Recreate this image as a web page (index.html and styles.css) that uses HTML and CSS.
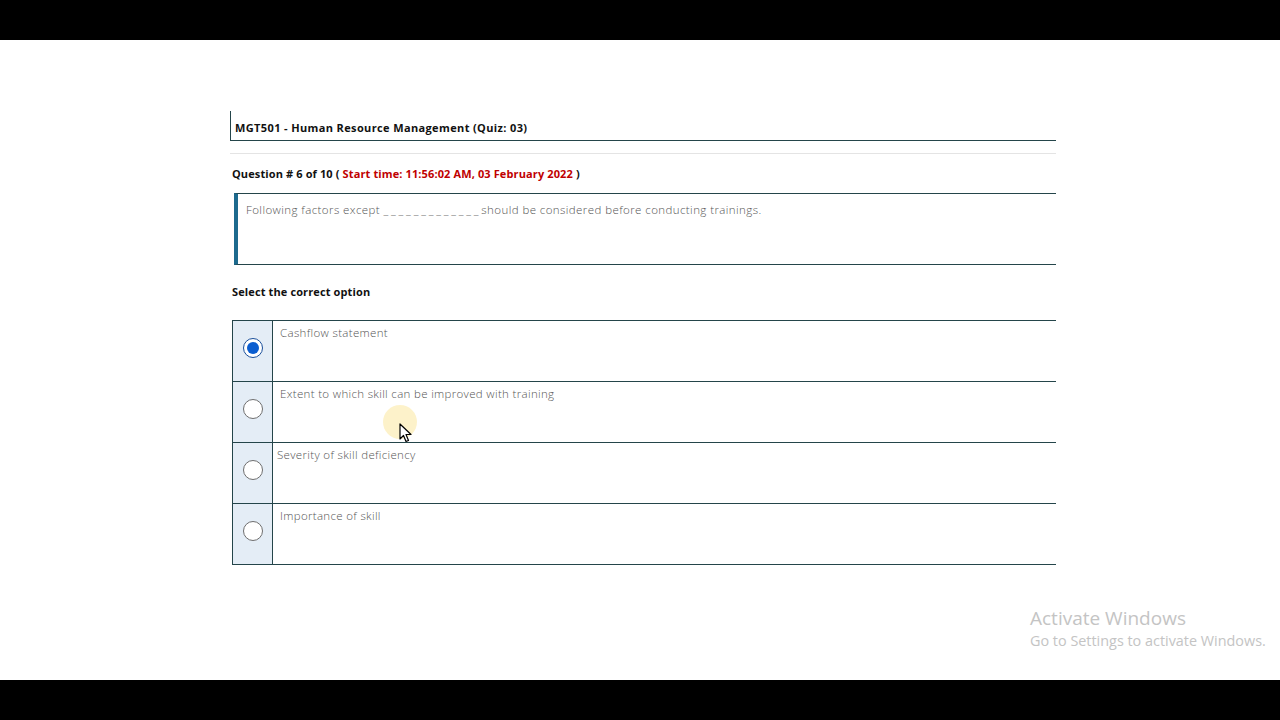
FILE: index.html
```html
<!DOCTYPE html>
<html lang="en">
<head>
<meta charset="utf-8">
<title>Quiz</title>
<link rel="stylesheet" href="styles.css">
</head>
<body>
<div class="bar"></div>
<main class="page">
  <div class="quiz">
    <div class="course-title">MGT501 - Human Resource Management (Quiz: 03)</div>
    <div class="divider"></div>
    <div class="q-head">Question # 6 of 10 ( <span class="start">Start time: 11:56:02 AM, 03 February 2022</span> )</div>
    <div class="q-box">Following factors except <span class="blank">_____________</span>should be considered before conducting trainings.</div>
    <div class="select-label">Select the correct option</div>
    <div class="options">
      <div class="opt">
        <div class="opt-radio"><span class="radio checked"></span></div>
        <div class="opt-text">Cashflow statement</div>
      </div>
      <div class="opt">
        <div class="opt-radio"><span class="radio"></span></div>
        <div class="opt-text">Extent to which skill can be improved with training</div>
      </div>
      <div class="opt">
        <div class="opt-radio"><span class="radio"></span></div>
        <div class="opt-text shift">Severity of skill deficiency</div>
      </div>
      <div class="opt">
        <div class="opt-radio"><span class="radio"></span></div>
        <div class="opt-text">Importance of skill</div>
      </div>
    </div>
  </div>
  <div class="cursor">
    <span class="halo"></span>
    <svg class="arrow" width="14" height="20" viewBox="0 0 14 20"><path d="M1 1 L1 16 L4.5 12.5 L7 18.5 L9.5 17.5 L7 11.5 L12 11.5 Z" fill="#fff" stroke="#000" stroke-width="1.2" stroke-linejoin="round"/></svg>
  </div>
  <div class="activate">
    <div class="act-title">Activate Windows</div>
    <div class="act-sub">Go to Settings to activate Windows.</div>
  </div>
</main>
<div class="bar"></div>
</body>
</html>
```

FILE: styles.css
```css
html, body {
  margin: 0;
  padding: 0;
  background: #000;
}
body {
  font-family: "Open Sans", "Noto Sans", sans-serif;
  width: 1280px;
  height: 720px;
  overflow: hidden;
}
.bar {
  height: 40px;
  background: #000;
}
.page {
  position: relative;
  height: 640px;
  background: #fff;
  box-sizing: border-box;
  padding: 71px 0 0 230px;
}
.quiz {
  width: 826px;
  display: flex;
  flex-direction: column;
}
.course-title {
  height: 30px;
  box-sizing: border-box;
  border-left: 1px solid #24454a;
  border-bottom: 1px solid #24454a;
  padding: 9px 0 0 4px;
  font-size: 11px;
  font-weight: 700;
  color: #111;
  letter-spacing: 0.37px;
}
.divider {
  margin-top: 12px;
  height: 1px;
  background: #e4e4e4;
}
.q-head {
  margin: 13px 0 0 2px;
  font-size: 11px;
  font-weight: 700;
  color: #111;
  line-height: 14px;
  letter-spacing: 0.12px;
}
.start {
  color: #c00000;
}
.q-box {
  margin: 12px 0 0 4px;
  height: 72px;
  box-sizing: border-box;
  border-top: 1px solid #24454a;
  border-bottom: 1px solid #24454a;
  border-left: 4px solid #1d6a8e;
  padding: 9px 0 0 8px;
  font-size: 11.5px;
  font-weight: 300;
  color: #555;
  line-height: 14px;
  letter-spacing: 0.42px;
}
.blank {
  letter-spacing: 2.8px;
}
.select-label {
  margin: 20px 0 0 2px;
  font-size: 11px;
  font-weight: 700;
  color: #111;
  line-height: 14px;
  letter-spacing: 0.12px;
}
.options {
  margin: 21px 0 0 2px;
  border-top: 1px solid #24454a;
  border-left: 1px solid #24454a;
}
.opt {
  display: flex;
  height: 61px;
  box-sizing: border-box;
  border-bottom: 1px solid #24454a;
}
.opt-radio {
  width: 40px;
  flex: none;
  background: #e4edf6;
  border-right: 1px solid #24454a;
  display: flex;
  align-items: flex-start;
  justify-content: center;
  padding-top: 17px;
  box-sizing: border-box;
}
.radio {
  width: 20px;
  height: 20px;
  box-sizing: border-box;
  border-radius: 50%;
  border: 1px solid #6e6e6e;
  background: #fff;
  display: flex;
  align-items: center;
  justify-content: center;
}
.radio.checked {
  border: 1.5px solid #1a4f9a;
}
.radio.checked::after {
  content: "";
  width: 12px;
  height: 12px;
  border-radius: 50%;
  background: #0b5ed0;
}
.opt-text {
  padding: 5px 0 0 7px;
  font-size: 11.5px;
  font-weight: 300;
  color: #555;
  line-height: 14px;
  letter-spacing: 0.33px;
}
.opt-text.shift {
  padding-left: 4px;
}
.cursor {
  position: absolute;
  left: 383px;
  top: 365px;
  width: 40px;
  height: 40px;
}
.halo {
  position: absolute;
  left: 0;
  top: 0;
  width: 34px;
  height: 34px;
  border-radius: 50%;
  background: #fdf1c4;
  opacity: 0.9;
}
.arrow {
  position: absolute;
  left: 16px;
  top: 18px;
}
.activate {
  position: absolute;
  left: 1030px;
  top: 566px;
  font-family: "Open Sans", "Noto Sans", sans-serif;
  color: #c4c4c4;
}
.act-title {
  font-size: 19px;
  line-height: 25px;
}
.act-sub {
  font-size: 14.4px;
  line-height: 20px;
}
```
